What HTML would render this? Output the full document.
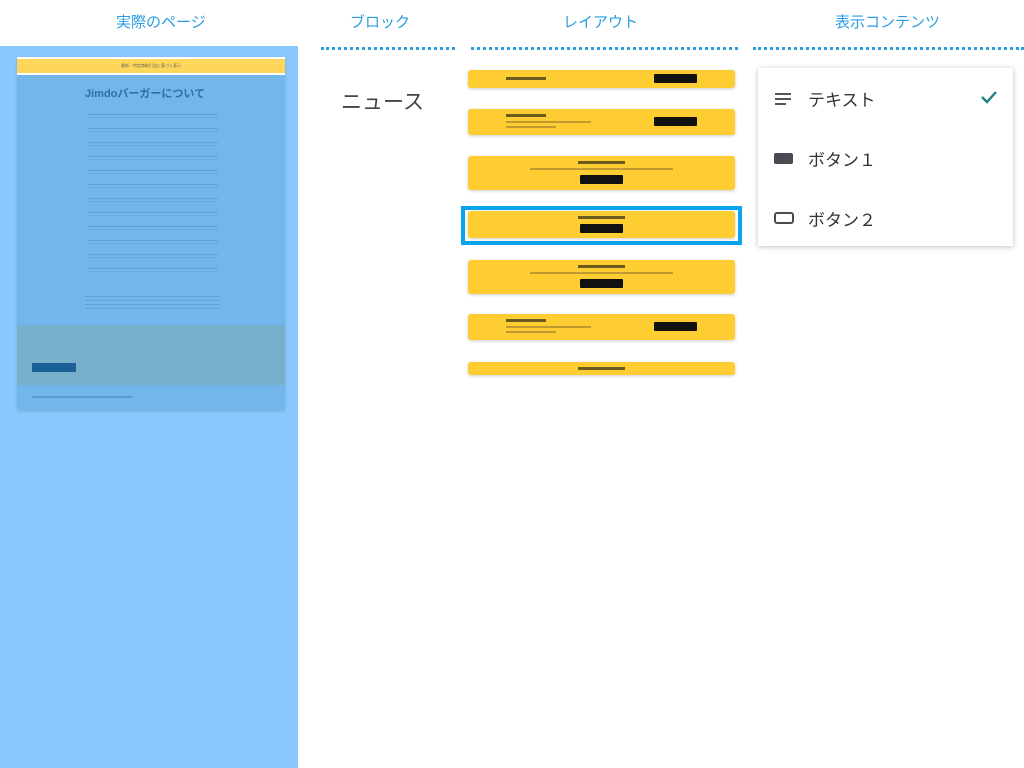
<!DOCTYPE html><html><head><meta charset="utf-8"><style>
*{margin:0;padding:0;box-sizing:border-box}
body{width:1024px;height:768px;background:#fff;position:relative;overflow:hidden;font-family:"Liberation Sans","Noto Sans CJK JP",sans-serif}
.a{position:absolute}
.h{color:#2a9ee0;font-size:15px;top:11px}
.dot{top:47px;height:3px;border-top:3px dotted #2a9ee0}
.card{position:absolute;left:468px;width:267px;background:#fdcd32;border-radius:3px;box-shadow:0 1px 3px rgba(0,0,0,.2);font-size:4px;color:#333}
.btn{position:absolute;background:#111;width:43px;height:9px;border-radius:1px}
.t{position:absolute;height:3px;background:#6a5a22;}
.s{position:absolute;height:2px;background:#c09a30;}
.item{position:absolute;left:774px;font-size:17px;color:#333}
</style></head><body>
<div class="a h" style="left:116px">実際のページ</div>
<div class="a h" style="left:350px">ブロック</div>
<div class="a h" style="left:563px">レイアウト</div>
<div class="a h" style="left:835px">表示コンテンツ</div>
<div class="a dot" style="left:321px;width:134px"></div>
<div class="a dot" style="left:471px;width:267px"></div>
<div class="a dot" style="left:753px;width:271px"></div>

<div class="a" style="left:0;top:46px;width:298px;height:722px;background:#89c8fd"></div>
<div class="a" style="left:17px;top:57px;width:268px;height:353px;background:#73b6ec;box-shadow:0 1px 3px rgba(0,0,0,.15)"></div>
<div class="a" style="left:17px;top:57px;width:268px;height:18px;background:#fff"></div>
<div class="a" style="left:17px;top:59px;width:268px;height:14px;background:#fed65a;font-size:4px;text-align:center;line-height:14px;color:#665">最新・特定商取引法に基づく表示</div>
<div class="a" style="left:85px;top:85px;font-size:11px;color:#2e6fa8;font-weight:bold">Jimdoバーガーについて</div>
<div class="a" style="left:88px;top:112px;width:130px;height:165px;background:repeating-linear-gradient(#73b6ec 0 2px,#669fd6 2px 3px,#73b6ec 3px 5px,#6eaae0 5px 6px,#73b6ec 6px 14px)"></div>
<div class="a" style="left:85px;top:295px;width:135px;height:14px;background:repeating-linear-gradient(#73b6ec 0 1px,#66a0d4 1px 2px,#73b6ec 2px 4px)"></div>
<div class="a" style="left:17px;top:325px;width:268px;height:60px;background:#78b0cc"></div>
<div class="a" style="left:32px;top:363px;width:44px;height:9px;background:#1a5f96"></div>
<div class="a" style="left:32px;top:396px;width:100px;height:2px;background:#5e98cc"></div>

<div class="a" style="left:341px;top:86px;font-size:21px;color:#444">ニュース</div>

<div class="card" style="top:70px;height:18px"><div class="t" style="left:38px;top:7px;width:40px"></div><div class="btn" style="left:186px;top:4px"></div></div>
<div class="card" style="top:109px;height:26px"><div class="t" style="left:38px;top:5px;width:40px"></div><div class="s" style="left:38px;top:12px;width:85px"></div><div class="s" style="left:38px;top:17px;width:50px"></div><div class="btn" style="left:186px;top:8px"></div></div>
<div class="card" style="top:156px;height:34px"><div class="t" style="left:110px;top:5px;width:47px"></div><div class="s" style="left:62px;top:12px;width:143px"></div><div class="btn" style="left:112px;top:19px"></div></div>
<div class="a" style="left:461px;top:206px;width:281px;height:39px;border:4px solid #0aa3ee;background:#fff"></div>
<div class="card" style="top:211px;height:27px"><div class="t" style="left:110px;top:5px;width:47px"></div><div class="btn" style="left:112px;top:13px"></div></div>
<div class="card" style="top:260px;height:34px"><div class="t" style="left:110px;top:5px;width:47px"></div><div class="s" style="left:62px;top:12px;width:143px"></div><div class="btn" style="left:112px;top:19px"></div></div>
<div class="card" style="top:314px;height:26px"><div class="t" style="left:38px;top:5px;width:40px"></div><div class="s" style="left:38px;top:12px;width:85px"></div><div class="s" style="left:38px;top:17px;width:50px"></div><div class="btn" style="left:186px;top:8px"></div></div>
<div class="card" style="top:362px;height:13px"><div class="t" style="left:110px;top:5px;width:47px"></div></div>

<div class="a" style="left:758px;top:68px;width:255px;height:178px;background:#fff;box-shadow:0 1px 5px rgba(0,0,0,.25)"></div>
<div class="a" style="left:775px;top:93px;width:16px;height:2px;background:#555"></div>
<div class="a" style="left:775px;top:98px;width:16px;height:2px;background:#555"></div>
<div class="a" style="left:775px;top:103px;width:11px;height:2px;background:#555"></div>
<div class="item" style="left:808px;top:86px">テキスト</div>
<svg class="a" style="left:980px;top:90px" width="18" height="14"><path d="M2 7 L7 12 L16 2" stroke="#1f7f86" stroke-width="2.4" fill="none"/></svg>
<div class="a" style="left:774px;top:153px;width:19px;height:11px;background:#4a4a52;border-radius:2px"></div>
<div class="item" style="left:808px;top:146px">ボタン１</div>
<div class="a" style="left:774px;top:212px;width:20px;height:12px;border:2px solid #4a4a52;border-radius:3px"></div>
<div class="item" style="left:808px;top:206px">ボタン２</div>
</body></html>
